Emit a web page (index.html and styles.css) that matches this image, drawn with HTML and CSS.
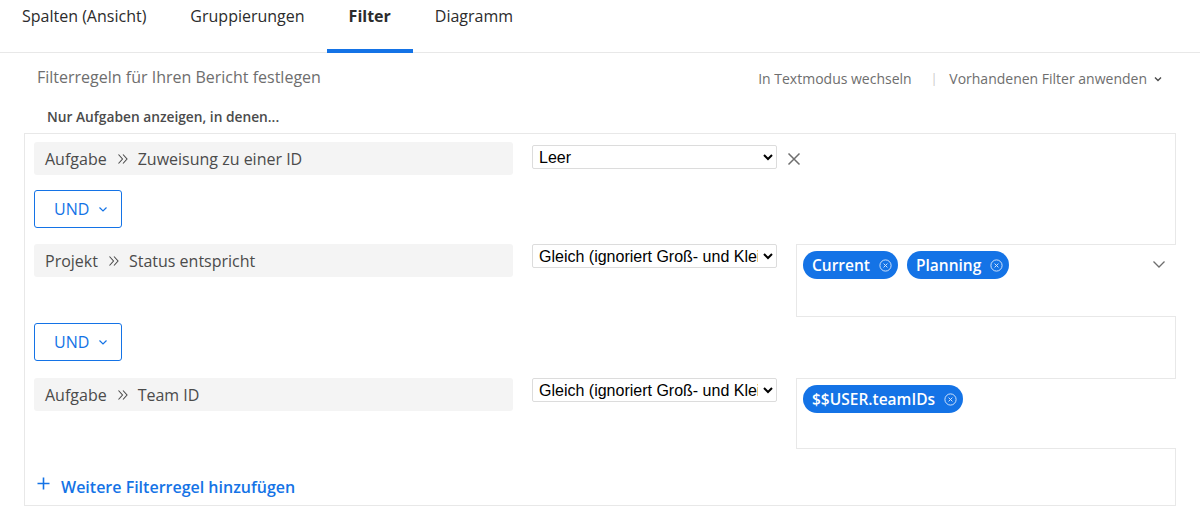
FILE: index.html
```html
<!DOCTYPE html>
<html lang="de">
<head>
<meta charset="utf-8">
<title>Filter</title>
<link rel="stylesheet" href="styles.css">
</head>
<body>
<nav class="tabs">
  <a class="tab">Spalten (Ansicht)</a>
  <a class="tab">Gruppierungen</a>
  <a class="tab tab-active">Filter</a>
  <a class="tab">Diagramm</a>
</nav>
<div class="subheader">
  <div class="subtitle">Filterregeln für Ihren Bericht festlegen</div>
  <div class="actions">
    <span class="action">In Textmodus wechseln</span>
    <span class="sep">|</span>
    <span class="action">Vorhandenen Filter anwenden</span>
    <svg class="chev-small" width="10" height="10" viewBox="0 0 10 10"><path d="M2 3.5 L5 6.5 L8 3.5" fill="none" stroke="#4b4b4b" stroke-width="1.4"/></svg>
  </div>
</div>
<div class="intro">Nur Aufgaben anzeigen, in denen...</div>
<div class="rules">
  <div class="rule rule-first">
    <div class="field"><span>Aufgabe</span><svg class="dbl" width="12" height="12" viewBox="0 0 12 12"><path d="M1.5 1.5 L5.5 6 L1.5 10.5 M6 1.5 L10 6 L6 10.5" fill="none" stroke="#4b4b4b" stroke-width="1.1"/></svg><span>Zuweisung zu einer ID</span></div>
    <select class="op op-first"><option>Leer</option></select>
    <svg class="close" width="14" height="14" viewBox="0 0 14 14"><path d="M1.5 1.5 L12.5 12.5 M12.5 1.5 L1.5 12.5" stroke="#6e6e6e" stroke-width="1.5"/></svg>
  </div>
  <button class="und und-1">UND <svg width="10" height="10" viewBox="0 0 10 10"><path d="M1.5 3.5 L5 7 L8.5 3.5" fill="none" stroke="#1473e6" stroke-width="1.2"/></svg></button>
  <div class="rule rule-2">
    <div class="field"><span>Projekt</span><svg class="dbl" width="12" height="12" viewBox="0 0 12 12"><path d="M1.5 1.5 L5.5 6 L1.5 10.5 M6 1.5 L10 6 L6 10.5" fill="none" stroke="#4b4b4b" stroke-width="1.1"/></svg><span>Status entspricht</span></div>
    <select class="op"><option>Gleich (ignoriert Groß- und Kleinschreibung)</option></select>
    <div class="value value-2">
      <span class="tag">Current<svg class="tag-x" width="13" height="13" viewBox="0 0 13 13"><circle cx="6.5" cy="6.5" r="5.6" fill="none" stroke="#cfe2fb" stroke-width="1"/><path d="M4.6 4.6 L8.4 8.4 M8.4 4.6 L4.6 8.4" stroke="#cfe2fb" stroke-width="1"/></svg></span>
      <span class="tag">Planning<svg class="tag-x" width="13" height="13" viewBox="0 0 13 13"><circle cx="6.5" cy="6.5" r="5.6" fill="none" stroke="#cfe2fb" stroke-width="1"/><path d="M4.6 4.6 L8.4 8.4 M8.4 4.6 L4.6 8.4" stroke="#cfe2fb" stroke-width="1"/></svg></span>
      <svg class="value-chev" width="14" height="10" viewBox="0 0 14 10"><path d="M1.5 2.5 L7 8 L12.5 2.5" fill="none" stroke="#6e6e6e" stroke-width="1.3"/></svg>
    </div>
  </div>
  <button class="und und-2">UND <svg width="10" height="10" viewBox="0 0 10 10"><path d="M1.5 3.5 L5 7 L8.5 3.5" fill="none" stroke="#1473e6" stroke-width="1.2"/></svg></button>
  <div class="rule rule-3">
    <div class="field"><span>Aufgabe</span><svg class="dbl" width="12" height="12" viewBox="0 0 12 12"><path d="M1.5 1.5 L5.5 6 L1.5 10.5 M6 1.5 L10 6 L6 10.5" fill="none" stroke="#4b4b4b" stroke-width="1.1"/></svg><span>Team ID</span></div>
    <select class="op"><option>Gleich (ignoriert Groß- und Kleinschreibung)</option></select>
    <div class="value value-3">
      <span class="tag">$$USER.teamIDs<svg class="tag-x" width="13" height="13" viewBox="0 0 13 13"><circle cx="6.5" cy="6.5" r="5.6" fill="none" stroke="#cfe2fb" stroke-width="1"/><path d="M4.6 4.6 L8.4 8.4 M8.4 4.6 L4.6 8.4" stroke="#cfe2fb" stroke-width="1"/></svg></span>
    </div>
  </div>
  <a class="add"><svg class="plus" width="13" height="13" viewBox="0 0 13 13"><path d="M6.5 0.5 V12.5 M0.5 6.5 H12.5" stroke="#1473e6" stroke-width="1.6"/></svg><span>Weitere Filterregel hinzufügen</span></a>
</div>
</body>
</html>
```
FILE: styles.css
```css
* { box-sizing: border-box; }
body {
  margin: 0;
  background: #fff;
  font-family: "Open Sans", "Liberation Sans", sans-serif;
  color: #4b4b4b;
}
.tabs {
  display: flex;
  height: 53px;
  border-bottom: 1px solid #e8e8e8;
}
.tab {
  display: block;
  padding: 4px 22px 0;
  height: 53px;
  font-size: 16px;
  line-height: 24px;
  color: #2c2c2c;
  border-bottom: 4px solid transparent;
}
.tab-active {
  font-weight: 700;
  border-bottom-color: #1473e6;
  margin-bottom: -1px;
}
.subheader {
  display: flex;
  justify-content: space-between;
  align-items: center;
  padding: 0 37px;
  height: 47px;
}
.subtitle {
  font-size: 16px;
  color: #6e6e6e;
}
.actions {
  display: flex;
  align-items: center;
  font-size: 14px;
  color: #6e6e6e;
  padding-top: 4px;
}
.sep { color: #c8c8c8; margin: 0 12px 0 19px; font-size: 12px; }
.chev-small { margin-left: 6px; }
.intro {
  font-size: 13.75px;
  font-weight: 600;
  padding: 7px 0 0 47px;
  height: 33px;
  color: #4b4b4b;
}
.rules {
  margin: 0 24px;
  border: 1px solid #e8e8e8;
  padding: 8px 0 0 9px;
  height: 373px;
}
.rule {
  display: flex;
  align-items: flex-start;
}
.field {
  width: 479px;
  height: 33px;
  background: #f4f4f4;
  border-radius: 3px;
  display: flex;
  align-items: center;
  padding-left: 11px;
  font-size: 16px;
  color: #4b4b4b;
}
.dbl { margin: 0 9px 0 10px; }
.op {
  margin-left: 19px;
  width: 245px;
  height: 24px;
  font-family: "Liberation Sans", Arial, sans-serif;
  font-size: 16px;
  color: #000;
  background: #fff;
  border: 1px solid #dcdcdc;
  border-radius: 2px;
  padding: 0 2px;
}
.op-first { margin-top: 3px; }
.close { margin: 10px 0 0 10px; }
.und {
  display: flex;
  align-items: center;
  gap: 9px;
  width: 88px;
  height: 38px;
  padding: 0 0 0 19px;
  background: #fff;
  border: 1px solid #1473e6;
  border-radius: 3px;
  font-family: "Open Sans", "Liberation Sans", sans-serif;
  font-size: 16px;
  color: #1473e6;
}
.und-1 { margin-top: 15px; }
.und-2 { margin-top: 6px; }
.rule-2 { margin-top: 16px; }
.rule-3 { margin-top: 17px; }
.value {
  position: relative;
  margin-left: 19px;
  flex: 1;
  margin-right: -1px;
  background: #fff;
  border: 1px solid #e8e8e8;
  border-right: 0;
  padding: 6px 0 0 6px;
  display: flex;
  align-items: flex-start;
  gap: 9px;
}
.value-2 { height: 73px; }
.value-3 { height: 71px; }
.tag {
  display: inline-flex;
  align-items: center;
  height: 28px;
  padding: 0 6px 0 9px;
  background: #1473e6;
  border-radius: 14px;
  color: #fff;
  font-size: 15.5px;
  font-weight: 600;
}
.tag-x { margin-left: 9px; }
.value-chev { position: absolute; right: 10px; top: 14px; }
.add {
  display: flex;
  align-items: center;
  margin-top: 27px;
  padding-left: 3px;
  color: #1473e6;
  font-size: 16px;
  font-weight: 600;
}
.plus { margin-right: 11px; position: relative; top: -4px; }
```
